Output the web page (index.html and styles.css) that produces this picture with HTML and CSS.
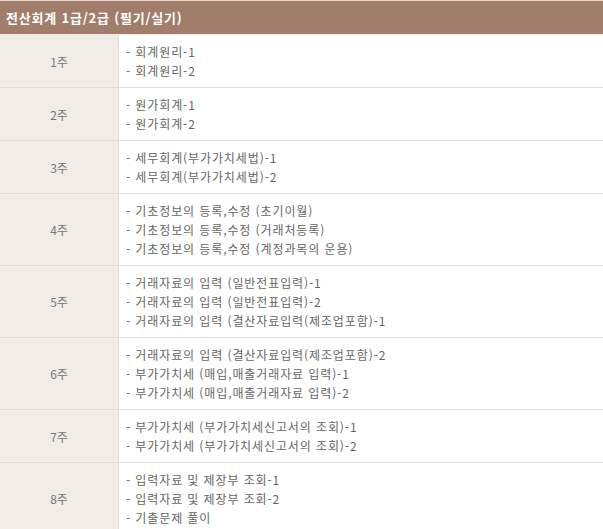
FILE: index.html
```html
<!DOCTYPE html>
<html lang="ko">
<head>
<meta charset="utf-8">
<link rel="stylesheet" href="styles.css">
</head>
<body>
<div class="table">
  <div class="head">전산회계 1급/2급 (필기/실기)</div>
  <div class="row"><div class="wk">1주</div><div class="items"><div>- 회계원리-1</div><div>- 회계원리-2</div></div></div>
  <div class="row"><div class="wk">2주</div><div class="items"><div>- 원가회계-1</div><div>- 원가회계-2</div></div></div>
  <div class="row"><div class="wk">3주</div><div class="items"><div>- 세무회계(부가가치세법)-1</div><div>- 세무회계(부가가치세법)-2</div></div></div>
  <div class="row"><div class="wk">4주</div><div class="items"><div>- 기초정보의 등록,수정 (초기이월)</div><div>- 기초정보의 등록,수정 (거래처등록)</div><div>- 기초정보의 등록,수정 (계정과목의 운용)</div></div></div>
  <div class="row"><div class="wk">5주</div><div class="items"><div>- 거래자료의 입력 (일반전표입력)-1</div><div>- 거래자료의 입력 (일반전표입력)-2</div><div>- 거래자료의 입력 (결산자료입력(제조업포함)-1</div></div></div>
  <div class="row"><div class="wk">6주</div><div class="items"><div>- 거래자료의 입력 (결산자료입력(제조업포함)-2</div><div>- 부가가치세 (매입,매출거래자료 입력)-1</div><div>- 부가가치세 (매입,매출거래자료 입력)-2</div></div></div>
  <div class="row"><div class="wk">7주</div><div class="items"><div>- 부가가치세 (부가가치세신고서의 조회)-1</div><div>- 부가가치세 (부가가치세신고서의 조회)-2</div></div></div>
  <div class="row"><div class="wk">8주</div><div class="items"><div>- 입력자료 및 제장부 조회-1</div><div>- 입력자료 및 제장부 조회-2</div><div>- 기출문제 풀이</div></div></div>
</div>
</body>
</html>
```
FILE: styles.css
```css
html, body { margin: 0; padding: 0; background: #fff; }
body { font-family: "Noto Sans CJK KR", "Noto Sans", sans-serif; font-size: 12px; color: #666; }
.table { width: 603px; }
.head {
  background: #a07e6b;
  color: #fff;
  font-weight: bold;
  font-size: 13px;
  letter-spacing: 0.8px;
  height: 33px;
  line-height: 33px;
  padding-left: 6px;
  border-top: 1px solid #e9d3c9;
  border-bottom: 1px solid #f3e6e0;
}
.row { display: flex; border-bottom: 1px solid #ddd; }
.wk {
  width: 118px;
  background: #f1ece8;
  border-right: 1px solid #e4dcd6;
  display: flex;
  align-items: center;
  justify-content: center;
  color: #777;
}
.items { padding: 7px 0 7px 7px; line-height: 19px; letter-spacing: 0.9px; }
```
